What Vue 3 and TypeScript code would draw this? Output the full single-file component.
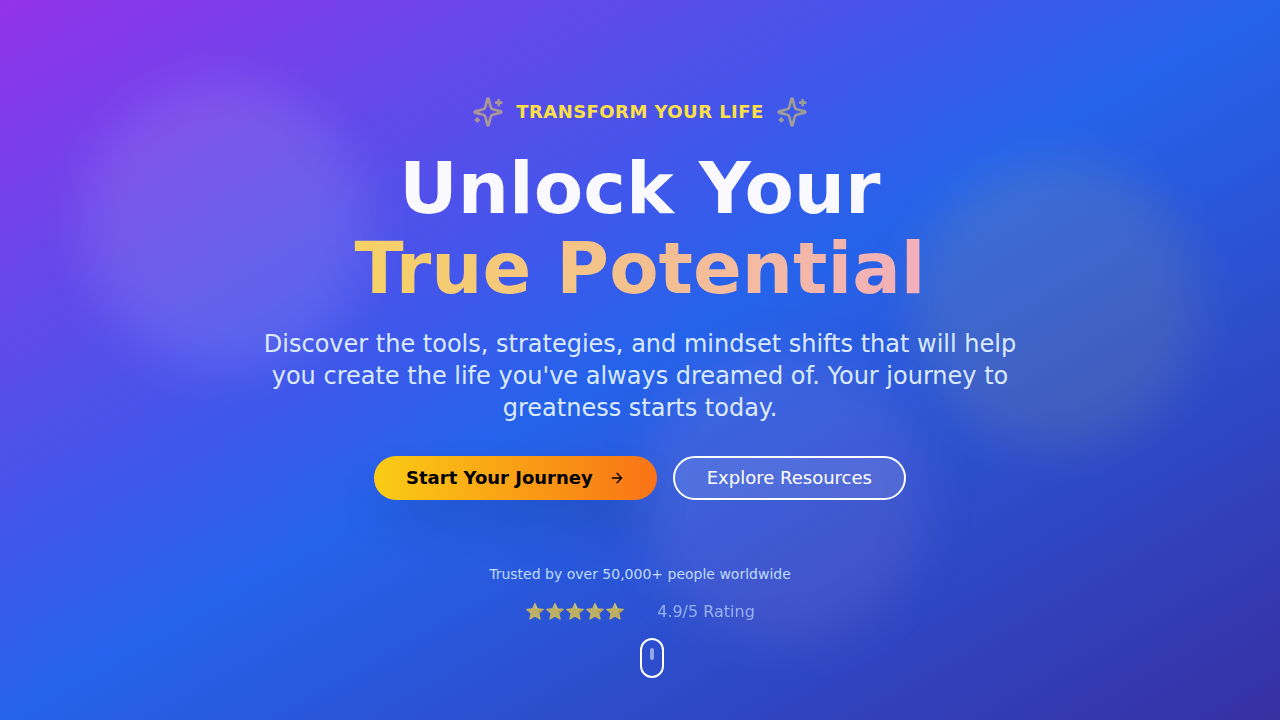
<script setup lang="ts">
const stars = '⭐'.repeat(5)
const sparkles = [0, 1]
const goTo = (id: string): void => {
  document.getElementById(id)?.scrollIntoView({ behavior: 'smooth' })
}
</script>

<template>
  <section class="hero">
    <div class="orbs" aria-hidden="true">
      <div class="orb orb-white"></div>
      <div class="orb orb-yellow"></div>
      <div class="orb orb-pink"></div>
    </div>

    <div class="content">
      <div class="eyebrow">
        <template v-for="n in sparkles" :key="n">
          <svg class="sparkle" viewBox="0 0 24 24" aria-hidden="true">
            <path d="M9.937 15.5A2 2 0 0 0 8.5 14.063l-6.135-1.582a.5.5 0 0 1 0-.962L8.5 9.936A2 2 0 0 0 9.937 8.5l1.582-6.135a.5.5 0 0 1 .963 0L14.063 8.5A2 2 0 0 0 15.5 9.937l6.135 1.581a.5.5 0 0 1 0 .964L15.5 14.063a2 2 0 0 0-1.437 1.437l-1.582 6.135a.5.5 0 0 1-.963 0z" />
            <path d="M20 3v4M22 5h-4M4 17v2M5 18H3" />
          </svg>
          <span v-if="n === 0" class="eyebrow-text">Transform Your Life</span>
        </template>
      </div>

      <h1 class="title">
        <span class="line line-plain">Unlock Your</span>
        <span class="line line-warm">True Potential</span>
      </h1>

      <p class="lead">
        Discover the tools, strategies, and mindset shifts that will help you create the life
        you've always dreamed of. Your journey to greatness starts today.
      </p>

      <div class="actions">
        <button class="btn btn-primary" type="button" @click="goTo('journey')">
          Start Your Journey
          <svg class="arrow" viewBox="0 0 24 24" aria-hidden="true">
            <path d="M5 12h14M12 5l7 7-7 7" />
          </svg>
        </button>
        <button class="btn btn-outline" type="button" @click="goTo('resources')">
          Explore Resources
        </button>
      </div>

      <p class="trusted">Trusted by over 50,000+ people worldwide</p>
      <div class="rating">
        <span class="stars">{{ stars }}</span>
        <span>4.9/5 Rating</span>
      </div>
    </div>

    <div class="scroll-hint" aria-hidden="true">
      <div class="wheel"></div>
    </div>
  </section>
</template>

<style>
body {
  margin: 0;
}
</style>

<style scoped>
* {
  box-sizing: border-box;
}

.hero {
  position: relative;
  display: flex;
  align-items: center;
  justify-content: center;
  min-height: 100vh;
  overflow: hidden;
  background: linear-gradient(to bottom right, #9333ea, #2563eb, #3730a3);
  font-family: "DejaVu Sans", sans-serif;
  color: #fff;
}

.orbs {
  position: absolute;
  inset: 0;
}

.orb {
  position: absolute;
  width: 288px;
  height: 288px;
  border-radius: 50%;
  filter: blur(24px);
}

.orb-white {
  top: 80px;
  left: 80px;
  background: rgb(255 255 255 / 0.1);
}

.orb-yellow {
  top: 160px;
  right: 80px;
  background: rgb(253 224 71 / 0.1);
}

.orb-pink {
  bottom: 80px;
  left: 50%;
  background: rgb(249 168 212 / 0.1);
}

.content {
  position: relative;
  width: 100%;
  max-width: 896px;
  text-align: center;
}

.eyebrow {
  display: flex;
  align-items: center;
  justify-content: center;
  gap: 12px;
  margin-bottom: 20px;
}

.eyebrow-text {
  font-size: 18px;
  line-height: 28px;
  font-weight: 700;
  letter-spacing: 0.025em;
  text-transform: uppercase;
  color: #fde047;
}

.sparkle {
  width: 32px;
  height: 32px;
  fill: none;
  stroke: #fde047;
  stroke-width: 2;
  stroke-linecap: round;
  stroke-linejoin: round;
  opacity: 0.5;
}

.title {
  margin: 0 0 20px;
  font-size: 72px;
  line-height: 80px;
  font-weight: 700;
}

.line {
  display: block;
  color: transparent;
  background-clip: text;
  -webkit-background-clip: text;
}

.line-plain {
  background-image: linear-gradient(to right, #faf9ff, #faf9ff);
}

.line-warm {
  background-image: linear-gradient(to right, #fde047, #f9a8d4);
  opacity: 0.97;
}

.lead {
  max-width: 768px;
  margin: 0 auto 32px;
  font-size: 24px;
  line-height: 32px;
  color: #dbeafe;
}

.actions {
  display: flex;
  flex-wrap: wrap;
  align-items: center;
  justify-content: center;
  gap: 16px;
  margin-bottom: 64px;
}

.btn {
  display: inline-flex;
  align-items: center;
  justify-content: center;
  height: 44px;
  padding: 0 32px;
  border: 0;
  border-radius: 22px;
  font-family: inherit;
  font-size: 18px;
  line-height: 28px;
  cursor: pointer;
}

.btn-primary {
  gap: 16px;
  font-weight: 700;
  color: #000;
  background: linear-gradient(to right, #facc15, #f97316);
  box-shadow: 0 25px 50px -12px rgb(0 0 0 / 0.25);
}

.btn-outline {
  border: 2px solid #fff;
  color: #fff;
  background: rgb(255 255 255 / 0.1);
}

.arrow {
  width: 16px;
  height: 16px;
  fill: none;
  stroke: currentColor;
  stroke-width: 2;
  stroke-linecap: round;
  stroke-linejoin: round;
}

.trusted {
  margin: 0 0 16px;
  font-size: 14px;
  line-height: 20px;
  color: #bfdbfe;
}

.rating {
  display: flex;
  align-items: center;
  justify-content: center;
  gap: 32px;
  font-size: 16px;
  line-height: 24px;
  color: #bfdbfe;
  opacity: 0.7;
}

.scroll-hint {
  position: absolute;
  bottom: 42px;
  left: 50%;
  display: flex;
  justify-content: center;
  width: 24px;
  height: 40px;
  padding-top: 8px;
  border: 2px solid #fff;
  border-radius: 12px;
}

.wheel {
  width: 4px;
  height: 12px;
  border-radius: 2px;
  background: rgb(255 255 255 / 0.5);
}
</style>
